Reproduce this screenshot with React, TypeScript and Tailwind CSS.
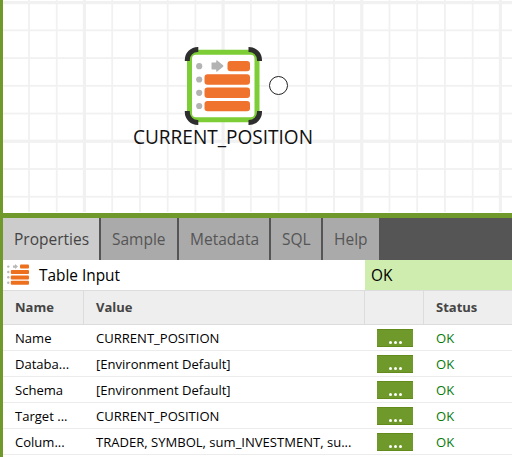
import React from "react";

const GRID = 27.73;
const verticals = Array.from({ length: 19 }, (_, i) => ({ at: 29 + i * GRID, major: i % 5 === 2 }));
const horizontals = Array.from({ length: 8 }, (_, i) => ({ at: 2.6 + i * GRID, major: i % 5 === 0 }));

function Grid() {
  return (
    <svg className="block h-full w-full" viewBox="3 0 509 213" preserveAspectRatio="none">
      <g fill="#f1f1f1">
        {verticals.map((l) => (
          <rect key={l.at} x={l.at - (l.major ? 1.6 : 0.9)} y={0} width={l.major ? 3.2 : 1.8} height={212} />
        ))}
        {horizontals.map((l) => (
          <rect key={l.at} x={3} y={l.at - (l.major ? 1.6 : 0.9)} width={509} height={l.major ? 3.2 : 1.8} />
        ))}
      </g>
    </svg>
  );
}

function TableNode() {
  return (
    <svg className="block" width="79" height="79" viewBox="184 46 79 79">
      <rect x="189.5" y="52.3" width="67.5" height="67.5" rx="6.5" fill="#fff" stroke="#7dcd37" strokeWidth="5" />
      <g fill="none" stroke="#2e2e2e" strokeWidth="5">
        <path d="M187.300 61v-1a10.500 10.500 0 0 1 10.500-10.500h.500" />
        <path d="M248.500 49.500h.500a10.500 10.500 0 0 1 10.500 10.500v1" />
        <path d="M187.300 111v1a10.500 10.500 0 0 0 10.500 10.500h.500" />
        <path d="M248.500 122.500h.500a10.500 10.500 0 0 0 10.500-10.500v-1" />
      </g>
      <g fill="#b3b3b3">
        <circle cx="199.200" cy="66.200" r="3.100" />
        <circle cx="199.200" cy="79.500" r="3.100" />
        <circle cx="199.200" cy="92.800" r="3.100" />
        <circle cx="199.200" cy="106" r="3.100" />
        <path d="M211.500 63.200q0-.7.700-.7h4v-1.600q0-1.100 1-.400l5.900 4.800q.6.700 0 1.400l-5.900 4.800q-1 .7-1-.4v-1.600h-4q-.7 0-.7-.7z" />
      </g>
      <g fill="#ef722d">
        <rect x="227.500" y="60.900" width="22.500" height="10.400" rx="3" />
        <rect x="204.500" y="74.300" width="45.500" height="10.400" rx="3" />
        <rect x="204.500" y="87.600" width="45.500" height="10.400" rx="3" />
        <rect x="204.500" y="100.900" width="45.500" height="10.400" rx="3" />
      </g>
    </svg>
  );
}

function SmallTableIcon() {
  return (
    <svg className="block shrink-0" width="24" height="24" viewBox="6 263 24 24">
      <g fill="#b8b8b8">
        <circle cx="8.300" cy="266.600" r="1.200" />
        <circle cx="8.300" cy="272" r="1.200" />
        <circle cx="8.300" cy="277.300" r="1.200" />
        <circle cx="8.300" cy="282.700" r="1.200" />
        <path d="M13 265.500h2v-1.400l3 2.500-3 2.500v-1.400h-2z" />
      </g>
      <g fill="#ed701f">
        <rect x="20" y="264.600" width="9" height="4" rx="1" />
        <rect x="10.800" y="270" width="18.200" height="4" rx="1" />
        <rect x="10.800" y="275.400" width="18.200" height="4" rx="1" />
        <rect x="10.800" y="280.800" width="18.200" height="4" rx="1" />
      </g>
    </svg>
  );
}

const rows = [
  ["Name", "CURRENT_POSITION"],
  ["Databa...", "[Environment Default]"],
  ["Schema", "[Environment Default]"],
  ["Target ...", "CURRENT_POSITION"],
  ["Colum...", "TRADER, SYMBOL, sum_INVESTMENT, su..."],
];

const columns = "grid grid-cols-[81px_281px_59px_88px]";

export default function App() {
  return (
    <div className="flex h-[457px] w-[512px] flex-col overflow-hidden border-l-[3px] border-[#6f992a] bg-white font-['Open_Sans',sans-serif] text-black">
      <main className="relative h-[213px] shrink-0">
        <Grid />
        <div className="absolute top-[46px] left-[181px]">
          <TableNode />
        </div>
        <div className="absolute top-[76px] left-[266px] size-[19px] rounded-full border-[1.500px] border-[#222] bg-white" />
        <div className="absolute top-[124px] left-[130px] text-[19.05px] leading-[26px] whitespace-nowrap text-[#111]">CURRENT_POSITION</div>
      </main>
      <div className="h-[5px] shrink-0 bg-[#6f992a]" />
      <nav className="flex h-[42px] shrink-0 gap-[2px] bg-[#555] text-[15.5px] leading-[42px] text-[#555]">
        <div className="w-[96px] bg-[#cccccc] pl-[11px] text-[#444]">Properties</div>
        <div className="w-[76px] bg-[#aaaaaa] pl-[11px]">Sample</div>
        <div className="w-[90px] bg-[#aaaaaa] pl-[11px]">Metadata</div>
        <div className="w-[50px] bg-[#aaaaaa] pl-[11px]">SQL</div>
        <div className="w-[56px] bg-[#aaaaaa] pl-[11px]">Help</div>
      </nav>
      <section className="flex h-[30px] shrink-0 text-[15.4px] leading-[32px]">
        <div className="flex w-[362px] gap-[9px] pl-[3px]">
          <div className="pt-[3px]"><SmallTableIcon /></div>
          <span>Table Input</span>
        </div>
        <div className="flex-1 bg-[#cfedaf] pl-[6px]">OK</div>
      </section>
      <div className={columns + " h-[35px] shrink-0 border-y border-[#dcdcdc] bg-[#eeeeee] text-[13px] leading-[33px] font-bold text-[#444]"}>
        <div className="border-r border-[#dcdcdc] pl-[12px]">Name</div>
        <div className="border-r border-[#dcdcdc] pl-[12px]">Value</div>
        <div className="border-r border-[#dcdcdc]" />
        <div className="pl-[12px]">Status</div>
      </div>
      {rows.map(([name, value]) => (
        <div key={name} className={columns + " h-[26px] shrink-0 border-b border-[#ececec] text-[13.05px] leading-[27px] whitespace-nowrap"}>
          <div className="h-[25px] pl-[12px]">{name}</div>
          <div className="h-[25px] pl-[12px]">{value}</div>
          <div className="h-[25px] pt-[4px] pl-[12px]">
            <button className="flex h-[18px] w-[36px] items-end justify-center gap-[2px] border-y border-[#628b1b] bg-[#6f992a] pb-[2px]">
              <i className="size-[3px] rounded-full bg-white" />
              <i className="size-[3px] rounded-full bg-white" />
              <i className="size-[3px] rounded-full bg-white" />
            </button>
          </div>
          <div className="h-[25px] pl-[12px] text-[#087a08]">OK</div>
        </div>
      ))}
    </div>
  );
}
